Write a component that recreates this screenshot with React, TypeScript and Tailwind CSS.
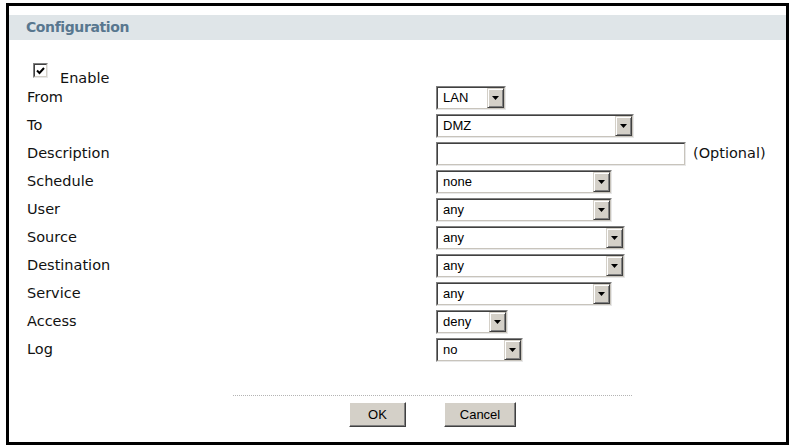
import React from "react";

const label = "font-['DejaVu_Sans',Verdana,sans-serif] text-[14.5px] text-[#111]";

function Sunken({ width, children }: { width: number; children?: React.ReactNode }) {
  return (
    <div
      className="flex h-[24px] border border-t-[#808080] border-l-[#808080] border-b-[#e8e8e8] border-r-[#e8e8e8]"
      style={{ width }}
    >
      <div className="flex flex-1 border border-t-[#404040] border-l-[#404040] border-b-[#c8c4bc] border-r-[#c8c4bc] bg-white">
        {children}
      </div>
    </div>
  );
}

function Select({ width, value }: { width: number; value: string }) {
  return (
    <Sunken width={width}>
      <span className="flex flex-1 items-center pl-[5px] font-['Liberation_Sans',Arial,sans-serif] text-[13px] text-black">
        {value}
      </span>
      <span className="flex w-[17px] items-center justify-center border border-t-[#d4d0c8] border-l-[#d4d0c8] border-b-[#404040] border-r-[#404040] bg-[#d4d0c8] shadow-[inset_1px_1px_0_#fff,inset_-1px_-1px_0_#808080]">
        <svg width="7" height="4" viewBox="0 0 7 4">
          <polygon points="0,0 7,0 3.5,4" fill="#000" />
        </svg>
      </span>
    </Sunken>
  );
}

function Button({ width, text }: { width: number; text: string }) {
  return (
    <div
      className="flex h-[25px] items-center justify-center border border-t-white border-l-white border-b-[#404040] border-r-[#404040] bg-[#d4d0c8] shadow-[inset_-1px_-1px_0_#808080] font-['Liberation_Sans',Arial,sans-serif] text-[13px] text-black"
      style={{ width }}
    >
      {text}
    </div>
  );
}

const rows: { name: string; control: React.ReactNode }[] = [
  { name: "From", control: <Select width={70} value="LAN" /> },
  { name: "To", control: <Select width={198} value="DMZ" /> },
  {
    name: "Description",
    control: (
      <div className="flex items-center gap-[7px]">
        <Sunken width={250} />
        <span className={label}>(Optional)</span>
      </div>
    ),
  },
  { name: "Schedule", control: <Select width={176} value="none" /> },
  { name: "User", control: <Select width={176} value="any" /> },
  { name: "Source", control: <Select width={189} value="any" /> },
  { name: "Destination", control: <Select width={189} value="any" /> },
  { name: "Service", control: <Select width={176} value="any" /> },
  { name: "Access", control: <Select width={72} value="deny" /> },
  { name: "Log", control: <Select width={87} value="no" /> },
];

export default function App() {
  return (
    <div className="h-[448px] w-[793px] overflow-hidden bg-white pt-[3px] pl-[6px]">
      <div className="h-[442px] w-[783px] border-[3px] border-black">
        <div className="mt-[9px] flex h-[25px] items-center bg-[#dfe5e8] pl-[17px]">
          <span className="font-['DejaVu_Sans',Verdana,sans-serif] text-[14px] font-bold tracking-[-0.4px] text-[#58778f]">
            Configuration
          </span>
        </div>

        <div className="mt-[16px] flex h-[28px] items-start pl-[24px]">
          <div className="mt-[7px] flex h-[15px] w-[15px] border border-t-[#808080] border-l-[#808080] border-b-[#e8e8e8] border-r-[#e8e8e8]">
            <div className="flex flex-1 items-center justify-center border border-t-[#404040] border-l-[#404040] border-b-[#d4d0c8] border-r-[#d4d0c8] bg-white">
              <svg width="9" height="8" viewBox="0 0 9 8">
                <path d="M1 3.5 L3.5 6 L8 1" stroke="#000" strokeWidth="2" fill="none" />
              </svg>
            </div>
          </div>
          <span className={`${label} ml-[12px] mt-[12px]`}>Enable</span>
        </div>

        {rows.map((r) => (
          <div key={r.name} className="flex h-[28px] items-center">
            <div className={`${label} w-[427px] pl-[18px]`}>{r.name}</div>
            {r.control}
          </div>
        ))}

        <div className="ml-[224px] mt-[31px] w-[399px] border-t border-dotted border-[#b4b4b4]" />
        <div className="ml-[224px] mt-[6px] flex w-[399px] justify-center gap-[38px]">
          <Button width={57} text="OK" />
          <Button width={72} text="Cancel" />
        </div>
      </div>
    </div>
  );
}
